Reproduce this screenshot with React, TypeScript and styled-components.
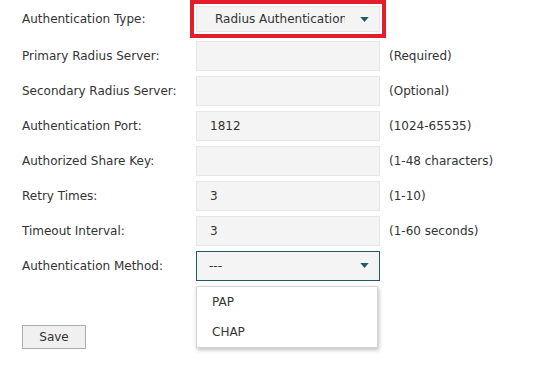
import React from "react";
import styled, { createGlobalStyle } from "styled-components";

const GlobalStyle = createGlobalStyle`
  html, body {
    margin: 0;
    padding: 0;
    background: #ffffff;
  }
  body {
    font-family: "DejaVu Sans", Verdana, sans-serif;
    font-size: 12px;
    color: #333333;
  }
`;

type Field = {
  label: string;
  value?: string;
  hint?: string;
};

const fields: Field[] = [
  { label: "Primary Radius Server:", hint: "(Required)" },
  { label: "Secondary Radius Server:", hint: "(Optional)" },
  { label: "Authentication Port:", value: "1812", hint: "(1024-65535)" },
  { label: "Authorized Share Key:", hint: "(1-48 characters)" },
  { label: "Retry Times:", value: "3", hint: "(1-10)" },
  { label: "Timeout Interval:", value: "3", hint: "(1-60 seconds)" },
];

function Caret() {
  return (
    <CaretIcon viewBox="0 0 10 6" aria-hidden="true">
      <path d="M0 0 H10 L5 6 Z" fill="#1d5b5e" />
    </CaretIcon>
  );
}

export default function App() {
  return (
    <Page>
      <GlobalStyle />
      <Form>
        <TypeRow>
          <Label>Authentication Type:</Label>
          <Highlight>
            <TypeSelect>
              <SelectText>Radius Authentication</SelectText>
              <Caret />
            </TypeSelect>
          </Highlight>
        </TypeRow>

        {fields.map((f) => (
          <Row key={f.label}>
            <Label>{f.label}</Label>
            <Input>{f.value}</Input>
            <Hint>{f.hint}</Hint>
          </Row>
        ))}

        <Row>
          <Label>Authentication Method:</Label>
          <SelectWrap>
            <MethodSelect>
              <span>---</span>
              <Caret />
            </MethodSelect>
            <Menu>
              <MenuItem>PAP</MenuItem>
              <MenuItem>CHAP</MenuItem>
            </Menu>
          </SelectWrap>
        </Row>
      </Form>
      <SaveButton>Save</SaveButton>
    </Page>
  );
}

const Page = styled.div`
  width: 539px;
  height: 373px;
  padding-left: 22px;
  box-sizing: border-box;
  overflow: hidden;
`;

const Form = styled.div`
  display: flex;
  flex-direction: column;
`;

const Row = styled.div`
  display: grid;
  grid-template-columns: 174px 184px auto;
  align-items: center;
  height: 35px;
`;

const TypeRow = styled(Row)`
  height: 38px;
`;

const Label = styled.div`
  white-space: nowrap;
`;

const Input = styled.div`
  height: 30px;
  box-sizing: border-box;
  background: #f4f4f4;
  border: 1px solid #e6e6e6;
  padding: 0 13px;
  display: flex;
  align-items: center;
`;

const Hint = styled.div`
  white-space: nowrap;
  margin-left: 9px;
`;

const Highlight = styled.div`
  outline: 4px solid #e31d2b;
  outline-offset: 2px;
`;

const TypeSelect = styled.div`
  height: 26px;
  box-sizing: border-box;
  background: #f4f4f4;
  border: 1px solid #e6e6e6;
  display: flex;
  align-items: center;
  justify-content: space-between;
  padding: 0 10px 0 18px;
`;

const SelectText = styled.span`
  display: block;
  width: 130px;
  overflow: hidden;
  white-space: nowrap;
`;

const SelectWrap = styled.div`
  position: relative;
`;

const MethodSelect = styled.div`
  height: 30px;
  box-sizing: border-box;
  background: #f4f4f4;
  border: 1px solid #1d5b5e;
  display: flex;
  align-items: center;
  justify-content: space-between;
  padding: 0 10px 0 12px;
`;

const CaretIcon = styled.svg`
  width: 9px;
  height: 5px;
  flex: none;
`;

const Menu = styled.div`
  position: absolute;
  top: calc(100% + 5px);
  left: 0;
  width: 182px;
  background: #ffffff;
  border: 1px solid #d4d4d4;
  box-shadow: 1px 2px 4px rgba(0, 0, 0, 0.25);
  box-sizing: border-box;
  z-index: 2;
`;

const MenuItem = styled.div`
  height: 30px;
  display: flex;
  align-items: center;
  padding-left: 15px;
`;

const SaveButton = styled.button`
  display: block;
  margin-top: 42px;
  width: 64px;
  height: 24px;
  background: #f0f0f0;
  border: 1px solid #adadad;
  border-radius: 0;
  font-family: "DejaVu Sans", Verdana, sans-serif;
  font-size: 12px;
  color: #333333;
  padding: 0;
`;
